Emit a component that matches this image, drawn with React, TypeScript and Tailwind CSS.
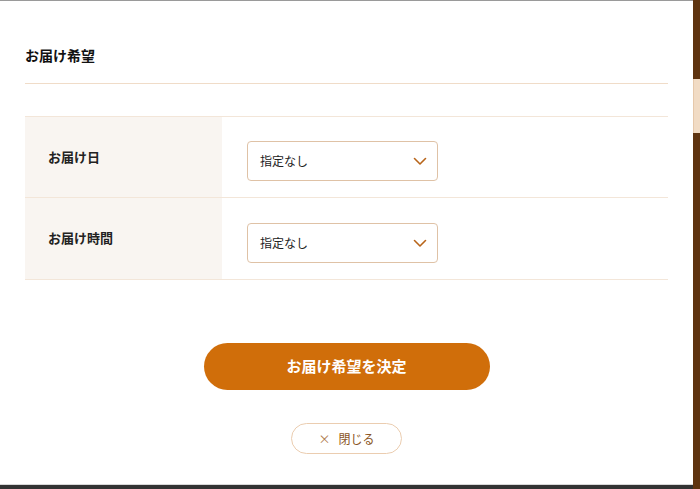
import React from "react";

const font = { fontFamily: '"Noto Sans CJK JP", "Noto Sans", sans-serif' };

function Chevron() {
  return (
    <svg width="14" height="9" viewBox="0 0 14 9" fill="none">
      <path d="M1.5 1.5 L7 7 L12.5 1.5" stroke="#b8651a" strokeWidth="1.6" strokeLinecap="round" strokeLinejoin="round" />
    </svg>
  );
}

function Row({ label, top }: { label: string; top: string }) {
  return (
    <div className="flex border-b border-[#f3e6d9]">
      <div className="w-[197px] bg-[#f9f5f1] pl-[23px] pt-[26px] pb-[20px]">
        <span className="text-[13px] font-bold text-[#222] leading-[20px]">{label}</span>
      </div>
      <div className={"flex-1 pl-[25px] pb-[16px] " + top}>
        <div className="w-[191px] h-[40px] border border-[#dfc2a6] rounded-[4px] flex items-center justify-between pl-[12px] pr-[10px] bg-white">
          <span className="text-[12px] text-[#222]">指定なし</span>
          <Chevron />
        </div>
      </div>
    </div>
  );
}

export default function App() {
  return (
    <div className="w-[700px] h-[489px] flex overflow-hidden" style={font}>
      <div className="w-[693px] h-full flex flex-col">
        <div className="h-[1px] bg-[#9a9a9a]" />
        <div className="flex-1 bg-white px-[25px] pt-[44px] border-b border-[#d8d8d8]">
          <h2 className="text-[14px] font-bold text-[#111] leading-[20px]">お届け希望</h2>
          <div className="mt-[18px] h-[1px] bg-[#f0dcc8] w-[643px]" />
          <div className="mt-[32px] w-[643px] border-t border-[#f3e6d9]">
            <Row label="お届け日" top="pt-[24px]" />
            <Row label="お届け時間" top="pt-[25px]" />
          </div>
          <div className="flex flex-col items-center w-[643px]">
            <button className="mt-[63px] w-[286px] h-[47px] rounded-full bg-[#d06e0a] text-white text-[15px] font-bold">
              お届け希望を決定
            </button>
            <button className="mt-[33px] w-[111px] h-[31px] rounded-full border border-[#ebcdb0] bg-white text-[12px] text-[#8a5524] flex items-center justify-center gap-[8px]">
              <span className="text-[12px] text-[#b07a4a]">×</span>
              <span>閉じる</span>
            </button>
          </div>
        </div>
        <div className="h-[4px] bg-[#333333]" />
      </div>
      <div className="w-[7px] h-full bg-[#5f3410] flex flex-col">
        <div className="h-[79px]" />
        <div className="h-[54px] bg-[#f1dbc4] border-l border-[#e6c8aa]" />
      </div>
    </div>
  );
}
